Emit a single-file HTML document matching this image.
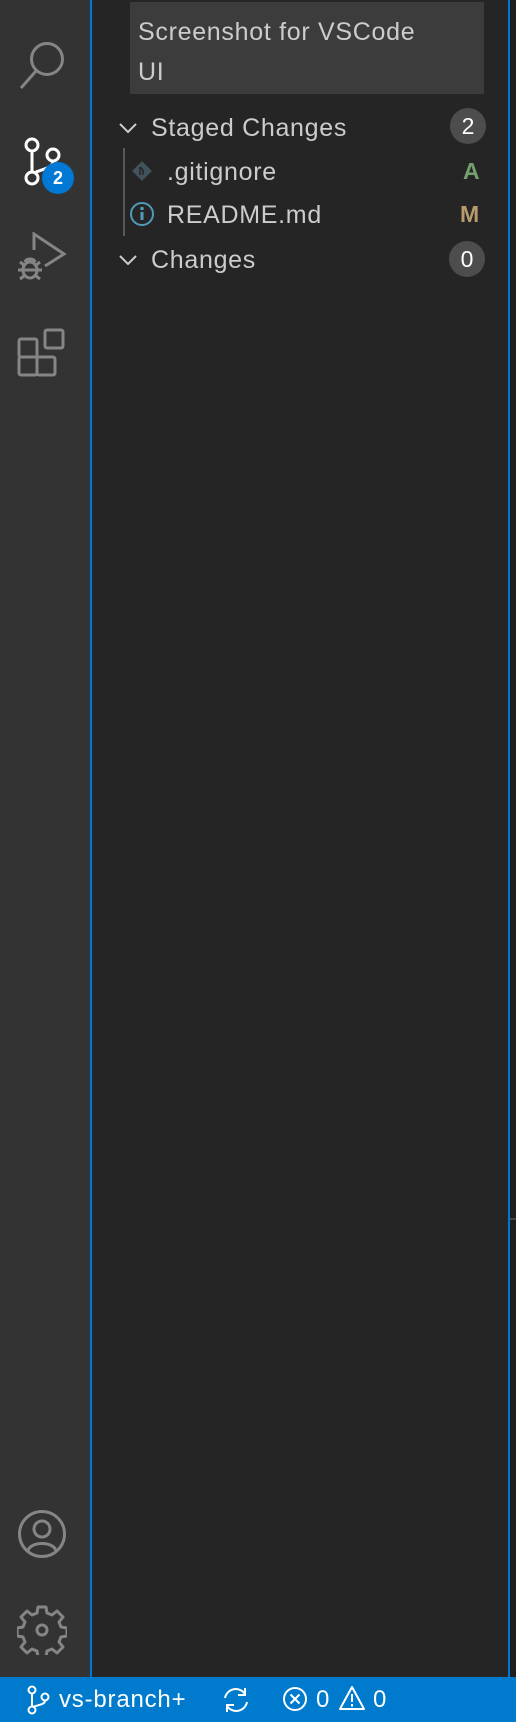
<!DOCTYPE html>
<html><head><meta charset="utf-8"><style>
*{margin:0;padding:0;box-sizing:border-box}
body{width:516px;height:1722px;background:#252526;position:relative;overflow:hidden;font-family:"Liberation Sans",sans-serif;color:#cccccc}
.act{position:absolute;left:0;top:0;width:90px;height:1677px;background:#333333}
.bl{position:absolute;left:90px;top:0;width:2px;height:1677px;background:#0078d4}
.br{position:absolute;left:508px;top:0;width:2px;height:1677px;background:#0078d4}
.ed{position:absolute;left:510px;top:0;width:6px;height:1677px;background:#1e1e1e}
.status{position:absolute;left:0;top:1677px;width:516px;height:45px;background:#007acc;color:#fff;font-size:24px;letter-spacing:0.8px}
.t{position:absolute;white-space:nowrap;letter-spacing:0.7px}
.input{position:absolute;left:130px;top:2px;width:354px;height:92px;background:#3c3c3c;font-size:25px;letter-spacing:0.7px;color:#cccccc;padding:10px 0 0 8px;line-height:40px}
.badge{position:absolute;width:36px;height:36px;border-radius:18px;background:#4d4d4d;color:#fff;font-size:23px;text-align:center;line-height:36px}
svg{position:absolute}
</style></head><body>
<div class="act"></div>
<div class="bl"></div><div class="br"></div><div class="ed"></div>
<div style="position:absolute;left:510px;top:1218px;width:6px;height:2px;background:#444"></div>

<svg style="left:18px;top:40px" width="50" height="52" viewBox="0 0 50 52"><circle cx="29" cy="19" r="15.5" fill="none" stroke="#858585" stroke-width="3"/><line x1="18" y1="31" x2="3" y2="48" stroke="#858585" stroke-width="3"/></svg>
<svg style="left:20px;top:135px" width="44" height="52" viewBox="0 0 44 52"><g fill="none" stroke="#fff" stroke-width="3"><circle cx="12" cy="10" r="6"/><circle cx="33" cy="20" r="6"/><circle cx="12" cy="43" r="6"/><line x1="12" y1="16" x2="12" y2="37"/><path d="M33 26 C33 33 22 34 14 38"/></g></svg>
<div style="position:absolute;left:42px;top:162px;width:32px;height:32px;border-radius:16px;background:#0078d4;color:#fff;font-weight:bold;font-size:18px;text-align:center;line-height:32px">2</div>
<svg style="left:16px;top:232px" width="54" height="54" viewBox="0 0 54 54"><g fill="none" stroke="#858585" stroke-width="3"><path d="M18 18 V2 L48 22 L29 34"/><ellipse cx="14" cy="38" rx="7" ry="8"/><path d="M2 38h24M4 30l4 3M24 30l-4 3M4 47l4-3M24 47l-4-3M9 30 C10 26 18 26 19 30"/></g></svg>
<svg style="left:17px;top:328px" width="50" height="52" viewBox="0 0 50 52"><g fill="none" stroke="#858585" stroke-width="3"><rect x="2" y="11" width="18" height="18" rx="2"/><rect x="2" y="29" width="18" height="18" rx="2"/><rect x="20" y="29" width="18" height="18" rx="2"/><rect x="28" y="2" width="18" height="18" rx="2"/></g></svg>
<svg style="left:17px;top:1509px" width="50" height="50" viewBox="0 0 50 50"><g fill="none" stroke="#858585" stroke-width="3"><circle cx="25" cy="25" r="22.5"/><circle cx="25" cy="20" r="8"/><path d="M11 42 C13 32 37 32 39 42"/></g></svg>
<svg style="left:17px;top:1605px" width="50" height="50" viewBox="0 0 50 50"><g fill="none" stroke="#858585" stroke-width="3"><path d="M21 2h8l1 6 5 2 5-4 6 6-4 5 2 5 6 1v8l-6 1-2 5 4 5-6 6-5-4-5 2-1 6h-8l-1-6-5-2-5 4-6-6 4-5-2-5-6-1v-8l6-1 2-5-4-5 6-6 5 4 5-2z" stroke-linejoin="round"/><circle cx="25" cy="25" r="5"/></g></svg>

<div class="input">Screenshot for VSCode<br>UI</div>

<svg style="left:118px;top:121px" width="22" height="16" viewBox="0 0 22 16"><path d="M2 3 L10 11 L18 3" fill="none" stroke="#cccccc" stroke-width="2"/></svg>
<div class="t" style="left:151px;top:114px;font-size:25px">Staged Changes</div>
<div class="badge" style="left:450px;top:108px">2</div>

<div style="position:absolute;left:123px;top:148px;width:2px;height:88px;background:#585858"></div>
<svg style="left:130px;top:159px" width="24" height="24" viewBox="0 0 24 24"><rect x="5" y="5" width="14" height="14" transform="rotate(45 12 12)" fill="#41535b"/><path d="M10 8v8M10 8l3 3v5" stroke="#252526" stroke-width="1.5" fill="none"/></svg>
<div class="t" style="left:167px;top:158px;font-size:25px">.gitignore</div>
<div class="t" style="left:463px;top:158px;font-size:23px;font-weight:bold;color:#73a06c">A</div>

<svg style="left:129px;top:201px" width="26" height="26" viewBox="0 0 26 26"><circle cx="13" cy="13" r="11" fill="none" stroke="#519aba" stroke-width="2"/><rect x="11.5" y="11" width="3" height="8" fill="#519aba"/><circle cx="13" cy="7.5" r="1.8" fill="#519aba"/></svg>
<div class="t" style="left:167px;top:201px;font-size:25px">README.md</div>
<div class="t" style="left:460px;top:201px;font-size:23px;font-weight:bold;color:#b89b6d">M</div>

<svg style="left:118px;top:253px" width="22" height="16" viewBox="0 0 22 16"><path d="M2 3 L10 11 L18 3" fill="none" stroke="#cccccc" stroke-width="2"/></svg>
<div class="t" style="left:151px;top:246px;font-size:25px">Changes</div>
<div class="badge" style="left:449px;top:241px">0</div>

<div class="status">
<svg style="left:25px;top:8px" width="26" height="30" viewBox="0 0 26 30"><g fill="none" stroke="#fff" stroke-width="2"><circle cx="7" cy="5" r="3.5"/><circle cx="20" cy="12" r="3.5"/><circle cx="7" cy="25" r="3.5"/><line x1="7" y1="8.5" x2="7" y2="21.5"/><path d="M20 15.5 C20 20 12 20 8 22"/></g></svg>
<div class="t" style="left:59px;top:9px;letter-spacing:0.8px">vs-branch+</div>
<svg style="left:221px;top:9px" width="30" height="28" viewBox="0 0 30 28"><g fill="none" stroke="#fff" stroke-width="2"><path d="M4 12 A11 11 0 0 1 24 8"/><path d="M24 2v7h-7"/><path d="M26 16 A11 11 0 0 1 6 20"/><path d="M6 26v-7h7"/></g></svg>
<svg style="left:282px;top:9px" width="26" height="26" viewBox="0 0 26 26"><g fill="none" stroke="#fff" stroke-width="2"><circle cx="13" cy="13" r="11"/><path d="M8.5 8.5l9 9M17.5 8.5l-9 9"/></g></svg>
<div class="t" style="left:316px;top:9px">0</div>
<svg style="left:338px;top:8px" width="28" height="26" viewBox="0 0 28 26"><g fill="none" stroke="#fff" stroke-width="2"><path d="M14 2 L26 24 H2 Z" stroke-linejoin="round"/><line x1="14" y1="9" x2="14" y2="17"/><line x1="14" y1="19" x2="14" y2="21.5"/></g></svg>
<div class="t" style="left:373px;top:9px">0</div>
</div>
</body></html>
